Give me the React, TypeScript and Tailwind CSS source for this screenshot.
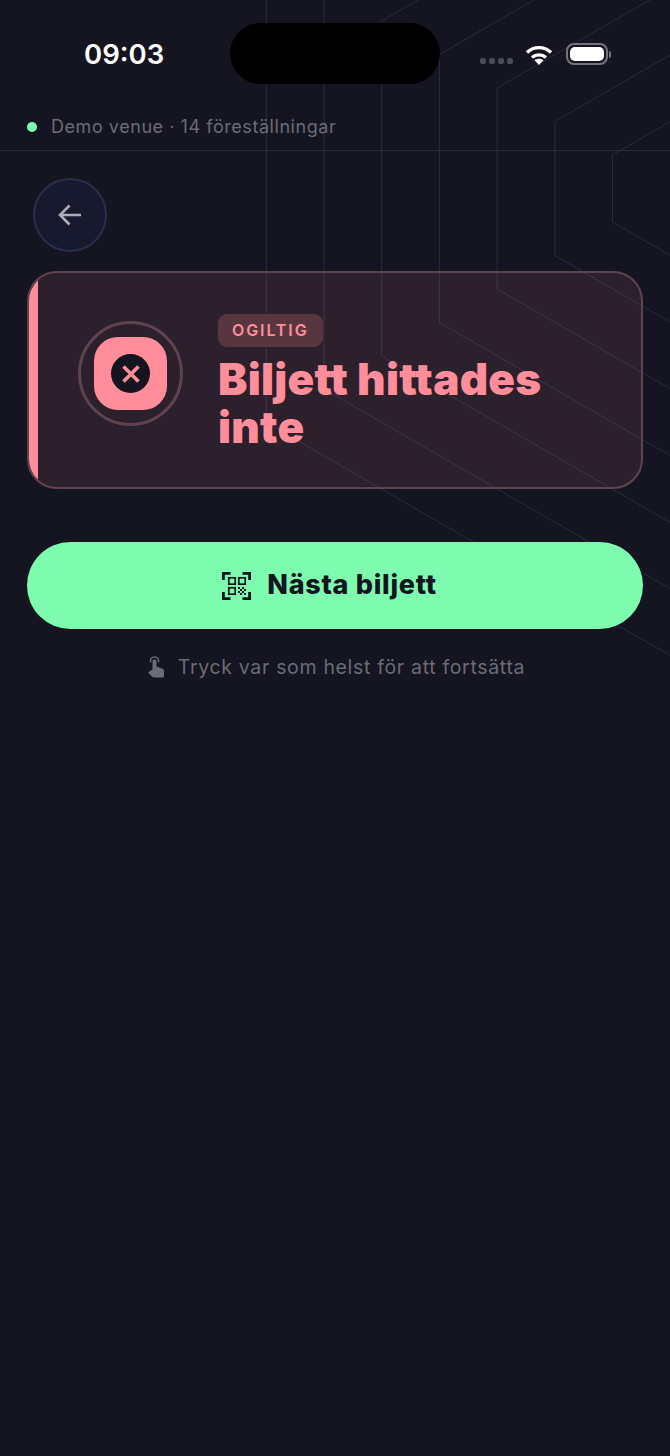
import React from 'react';

const hexagons = [33.5, 67, 100.5, 134, 167.5, 200.5, 234];

const BackgroundLines: React.FC = () => (
    <svg className="absolute inset-0" width="670" height="1456" fill="none" stroke="#2a2b3e" strokeWidth="1">
        {hexagons.map((h, i) => {
            const x = 612.5 - i * 57.7;
            const cy = 188.5;
            const run = 800;
            return (
                <path
                    key={h}
                    d={`M${x + run} ${cy - h - run * 0.577}L${x} ${cy - h}V${cy + h}L${x + run} ${cy + h + run * 0.577}`}
                />
            );
        })}
    </svg>
);

const QrIcon: React.FC = () => (
    <svg width="29" height="28" viewBox="0 0 29 28" fill="none" stroke="#141520" strokeWidth="1.700">
        <path d="M1.400 8V1.400H8.500M20.500 1.400H27.600V8M1.400 20V26.600H8.500M20.500 26.600H27.600V20" strokeWidth="2.800" />
        <rect x="6.800" y="5.800" width="6.400" height="6.400" />
        <rect x="16.800" y="5.800" width="6.400" height="6.400" />
        <rect x="6.800" y="15.800" width="6.400" height="6.400" />
        <path
            stroke="none"
            fill="#141520"
            d="M16 15h2v2h-2zM20 15h2v2h-2zM18 17h2v2h-2zM22 17h2v2h-2zM16 19h2v2h-2zM20 19h2v2h-2zM18 21h2v2h-2zM22 21h2v2h-2z"
        />
    </svg>
);

const HandIcon: React.FC = () => (
    <svg width="18" height="22" viewBox="0 0 18 22" fill="none">
        <path
            d="M1 16.500L5.500 13.500V5.500C5.500 4 6.500 3.500 7.500 3.500C8.500 3.500 9.500 4 9.500 5.500V10.500L15 12.500C16.500 13 17 14 17 15.500V19.500C17 21 16.500 21.500 15.500 21.500H7C6 21.500 5.500 21 5 20.500Z"
            fill="#6b6c76"
        />
        <path d="M3.800 6.500C2.500 3 4.500 0.900 7.500 0.900C10.500 0.900 12.500 3 11.200 6.500" stroke="#6b6c76" strokeWidth="1.500" />
    </svg>
);

const StatusBar: React.FC = () => (
    <div className="relative flex h-[107px] items-start">
        <span className="ml-[84px] mt-[37px] w-[79px] text-[27.500px] font-semibold leading-[34px] text-white">09:03</span>
        <div className="ml-[67px] mt-[23px] h-[61px] w-[210px] rounded-full bg-black" />
        <div className="ml-[40px] mt-[58px] flex gap-[3px]">
            <span className="h-[6px] w-[6px] rounded-[2px] bg-[#4b4c57]" />
            <span className="h-[6px] w-[6px] rounded-[2px] bg-[#4b4c57]" />
            <span className="h-[6px] w-[6px] rounded-[2px] bg-[#4b4c57]" />
            <span className="h-[6px] w-[6px] rounded-[2px] bg-[#4b4c57]" />
        </div>
        <svg className="ml-[12px] mt-[44px]" width="28" height="21" viewBox="0 0 28 21" fill="none" stroke="#fff" strokeWidth="3.400">
            <path d="M2 8.500C9 2 19 2 26 8.500" />
            <path d="M7 13.500C11 10 17 10 21 13.500" />
            <path stroke="none" fill="#fff" d="M9.500 16.300C12 14.300 16 14.300 18.500 16.300L14 21Z" />
        </svg>
        <div className="ml-[13px] mt-[43px] flex items-center">
            <div className="h-[22px] w-[42px] rounded-[8px] border-2 border-[#72737c] p-[2px]">
                <div className="h-full w-full rounded-[5px] bg-white" />
            </div>
            <span className="ml-[1px] h-[7px] w-[2px] rounded-r-full bg-[#72737c]" />
        </div>
    </div>
);

const App: React.FC = () => {
    return (
        <div className="relative h-[1456px] w-[670px] overflow-hidden bg-[#141520] font-['Inter',sans-serif]">
            <BackgroundLines />
            <div className="relative">
                <StatusBar />

                <div className="flex h-[44px] items-start border-b border-[#2a2b3e] pl-[27px] pt-[8px]">
                    <span className="mt-[7px] h-[10px] w-[10px] rounded-full bg-[#7dfcb0]" />
                    <span className="ml-[14px] text-[18px] leading-[24px] tracking-[0.55px] text-[#6b6c76]">
                        Demo venue · 14 föreställningar
                    </span>
                </div>

                <div className="pl-[33px] pt-[27px]">
                    <button
                        type="button"
                        className="flex h-[74px] w-[74px] items-center justify-center rounded-full border-2 border-[#2b2e4a] bg-[#171a2e]"
                    >
                        <svg width="26" height="24" viewBox="0 0 26 24" fill="none" stroke="#aeaeb4" strokeWidth="2.600">
                            <path d="M24 12H3M12.500 2.500L3 12L12.500 21.500" />
                        </svg>
                    </button>
                </div>

                <div className="relative mx-[27px] mt-[19px] flex h-[218px] overflow-hidden rounded-[30px] border-2 border-[#5f444d] bg-[#ff8e9a]/10">
                    <div className="w-[9px] shrink-0 bg-[#ff8e9a]" />
                    <div className="ml-[40px] mt-[48px] flex h-[105px] w-[105px] shrink-0 items-center justify-center rounded-full border-[3px] border-[#5f444d]">
                        <div className="flex h-[73px] w-[73px] items-center justify-center rounded-[24px] bg-[#ff8e9a]">
                            <div className="flex h-[39px] w-[39px] items-center justify-center rounded-full bg-[#141520]">
                                <svg width="20" height="20" viewBox="0 0 20 20" stroke="#ff8e9a" strokeWidth="3.600">
                                    <path d="M2.500 2.500L17.500 17.500M17.500 2.500L2.500 17.500" />
                                </svg>
                            </div>
                        </div>
                    </div>
                    <div className="ml-[35px] mt-[41px]">
                        <span className="inline-block h-[33px] rounded-[9px] bg-[#57363f] px-[14px] text-[16px] font-semibold leading-[33px] tracking-[1.900px] text-[#ff8e9a]">
                            OGILTIG
                        </span>
                        <h1 className="mt-[8px] w-[350px] text-[44px] font-black leading-[48px] tracking-[0.25px] text-[#ff8e9a]">
                            Biljett hittades inte
                        </h1>
                    </div>
                </div>

                <button
                    type="button"
                    className="mx-[27px] mt-[53px] flex h-[87px] w-[616px] items-center justify-center gap-[16px] rounded-full bg-[#7dfcb0] pr-[11px]"
                >
                    <QrIcon />
                    <span className="text-[27px] font-extrabold tracking-[0.7px] text-[#141520]">Nästa biljett</span>
                </button>

                <div className="mt-[25px] flex items-center justify-center gap-[13px] pl-[2px]">
                    <HandIcon />
                    <span className="text-[19.500px] leading-[26px] tracking-[0.67px] text-[#6b6c76]">
                        Tryck var som helst för att fortsätta
                    </span>
                </div>
            </div>
        </div>
    );
};

export default App;
